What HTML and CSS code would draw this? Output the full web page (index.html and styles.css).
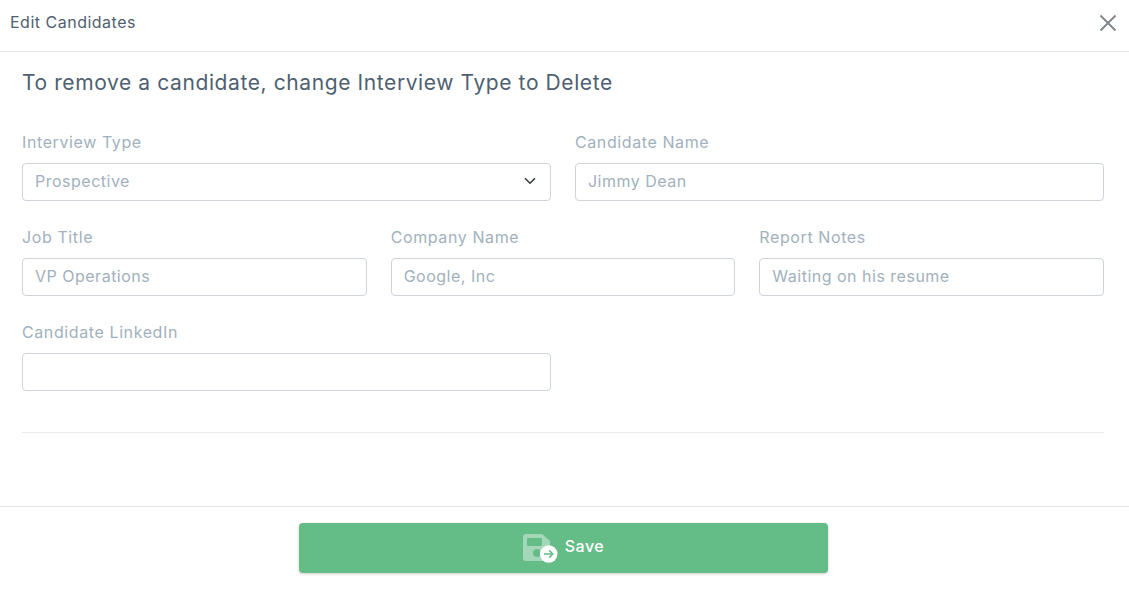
FILE: index.html
```html
<!DOCTYPE html>
<html lang="en">
<head>
  <meta charset="UTF-8" />
  <title>Edit Candidates</title>
  <link rel="stylesheet" href="styles.css">
</head>
<body>
  <div class="modal">
    <header class="modal-header">
      <h2>Edit Candidates</h2>
      <button class="close-btn" aria-label="Close">
        <svg width="18" height="18" viewBox="0 0 18 18"><path d="M1.5 1.5l15 15M16.5 1.5l-15 15" fill="none" stroke="#7e8488" stroke-width="1.8"/></svg>
      </button>
    </header>

    <main class="modal-body">
      <h3>To remove a candidate, change Interview Type to Delete</h3>

      <div class="form-grid">
        <div class="field half">
          <label>Interview Type</label>
          <div class="control select">
            <span>Prospective</span>
            <svg width="12" height="8" viewBox="0 0 12 8"><path d="M1 1.2l5 5 5-5" fill="none" stroke="#343a40" stroke-width="1.6"/></svg>
          </div>
        </div>
        <div class="field half">
          <label>Candidate Name</label>
          <input class="control" placeholder="Jimmy Dean">
        </div>
        <div class="field third">
          <label>Job Title</label>
          <input class="control" placeholder="VP Operations">
        </div>
        <div class="field third">
          <label>Company Name</label>
          <input class="control" placeholder="Google, Inc">
        </div>
        <div class="field third">
          <label>Report Notes</label>
          <input class="control" placeholder="Waiting on his resume">
        </div>
        <div class="field half">
          <label>Candidate LinkedIn</label>
          <input class="control">
        </div>
      </div>

      <hr class="divider">
    </main>

    <footer class="modal-footer">
      <button class="save-btn">
        <svg width="35" height="29" viewBox="0 0 35 29">
          <path d="M3 0h16l8 7v17a3 3 0 0 1-3 3H3a3 3 0 0 1-3-3V3a3 3 0 0 1 3-3z" fill="#a3d7b7"/>
          <rect x="4" y="4" width="15" height="8" rx="1" fill="#64bc87"/>
          <circle cx="14" cy="19" r="4" fill="#64bc87"/>
          <circle cx="25.700" cy="20" r="8.800" fill="#fff"/>
          <path d="M21 20h8.800M26.200 16.400l3.600 3.600-3.600 3.600" fill="none" stroke="#64bc87" stroke-width="1.500"/>
        </svg>
        <span>Save</span>
      </button>
    </footer>
  </div>
</body>
</html>
```

FILE: styles.css
```css
* {
  box-sizing: border-box;
}
body {
  margin: 0;
  font-family: 'Inter', 'Noto Sans', sans-serif;
  background: #fff;
  color: #4f6170;
}

.modal {
  display: flex;
  flex-direction: column;
  height: 598px;
}

.modal-header {
  display: flex;
  justify-content: space-between;
  align-items: center;
  height: 52px;
  padding: 0 12px 7px 10px;
  border-bottom: 1px solid #e4e4e7;
}
.modal-header h2 {
  margin: 0;
  font-size: 16px;
  font-weight: 400;
  letter-spacing: 0.5px;
}
.close-btn {
  display: flex;
  margin-top: 1px;
  padding: 0;
  border: none;
  background: none;
}

.modal-body {
  height: 454px;
  padding: 19px 25px 0 22px;
}
.modal-body h3 {
  margin: 0 0 36px;
  font-size: 21px;
  line-height: 24px;
  font-weight: 400;
  letter-spacing: 0.6px;
}

.form-grid {
  display: grid;
  grid-template-columns: repeat(6, 1fr);
  gap: 25px 24px;
}
.half {
  grid-column: span 3;
}
.third {
  grid-column: span 2;
}
.field label {
  display: block;
  height: 23px;
  margin-bottom: 9px;
  font-size: 16px;
  line-height: 23px;
  letter-spacing: 0.6px;
  color: #a2b1bd;
}
.control {
  display: block;
  width: 100%;
  height: 38px;
  padding: 0 12px 2px;
  border: 1px solid #ced4da;
  border-radius: 4px;
  background: #fff;
  font: inherit;
  font-size: 16px;
  letter-spacing: 0.5px;
  color: #a2b1bd;
  outline: none;
}
.control::placeholder {
  color: #a2b1bd;
  opacity: 1;
}
.select {
  display: flex;
  justify-content: space-between;
  align-items: center;
  padding-right: 14px;
}

.divider {
  height: 1px;
  margin: 41px 0 0;
  border: none;
  background: #e8eaec;
}

.modal-footer {
  display: flex;
  justify-content: center;
  padding: 16px 2px 0 0;
  border-top: 1px solid #e4e4e7;
}
.save-btn {
  display: flex;
  justify-content: center;
  align-items: center;
  gap: 7px;
  width: 529px;
  height: 50px;
  padding: 0 0 5px;
  border: none;
  border-radius: 4px;
  background: #64bc87;
  box-shadow: 0 1px 3px rgba(0, 0, 0, 0.2);
  color: #fff;
  font: inherit;
  font-size: 16px;
  font-weight: 500;
  letter-spacing: 0.5px;
}
.save-btn svg {
  margin-top: 6px;
}
```
